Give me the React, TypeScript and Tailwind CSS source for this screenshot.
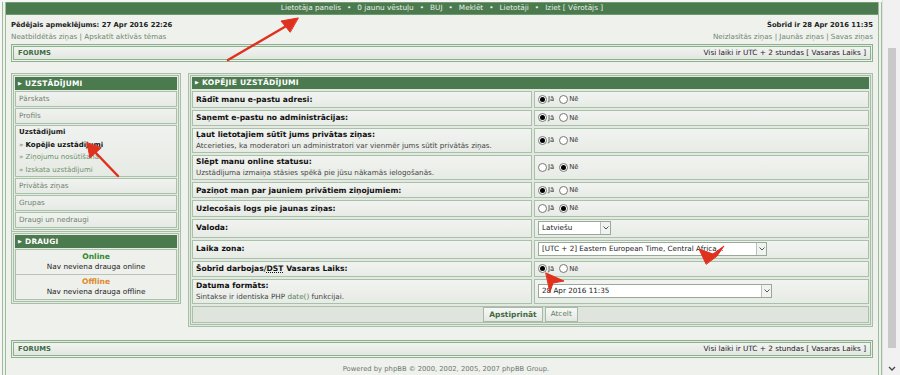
import React from 'react';

const font = "font-['DejaVu_Sans','Liberation_Sans',sans-serif]";

function Radio({ on }: { on?: boolean }) {
  return (
    <span className="inline-flex w-[9px] h-[9px] rounded-full border border-[#777] bg-white items-center justify-center">
      {on && <span className="w-[5px] h-[5px] rounded-full bg-black" />}
    </span>
  );
}

function YesNo({ yes }: { yes: boolean }) {
  return (
    <div className="flex items-center gap-[1px] text-[6.8px] text-[#333]">
      <Radio on={yes} />
      <span className="mr-[4px]">Jā</span>
      <Radio on={!yes} />
      <span>Nē</span>
    </div>
  );
}

function Select({ text, w }: { text: string; w: string }) {
  return (
    <div className={`flex items-center h-[14px] border border-[#9aa89a] bg-white ${w}`}>
      <span className="flex-1 pl-[3px] text-[7.2px] text-[#222] whitespace-nowrap overflow-hidden">{text}</span>
      <span className="w-[10px] h-full border-l border-[#b8c2b8] flex items-center justify-center bg-[#f1f3f1]">
        <svg width="6" height="4" viewBox="0 0 6 4"><path d="M0.5 0.5 L3 3 L5.5 0.5" stroke="#555" fill="none" strokeWidth="1" /></svg>
      </span>
    </div>
  );
}

function ForumsBar() {
  return (
    <div className="h-[18px] border-[3px] border-double border-[#8db08d] bg-gradient-to-b from-[#f1f3f0] to-[#e3e7e1] flex items-center justify-between px-[4px]">
      <span className="text-[6.8px] font-bold text-[#3f6b43]">FORUMS</span>
      <span className="text-[7.3px] text-[#222]">Visi laiki ir UTC + 2 stundas [ Vasaras Laiks ]</span>
    </div>
  );
}

function Head({ title, size }: { title: string; size: string }) {
  return (
    <div className={`h-[13px] bg-[#4a7a4e] flex items-center px-[3px] gap-[3px] text-white font-bold tracking-[0.2px] ${size}`}>
      <span className="text-[5px]">▶</span>
      {title}
    </div>
  );
}

function MenuItem({ label }: { label: string }) {
  return (
    <div className="h-[16px] border border-[#a9c0a9] bg-gradient-to-b from-[#f0f2ef] to-[#e6eae4] flex items-center px-[3px] text-[7.2px] text-[#6f826f]">
      {label}
    </div>
  );
}

type Row = { label: React.ReactNode; desc?: React.ReactNode; h: string; value: React.ReactNode };

const rows: Row[] = [
  { label: 'Rādīt manu e-pastu adresi:', h: 'h-[17px]', value: <YesNo yes /> },
  { label: 'Saņemt e-pastu no administrācijas:', h: 'h-[17px]', value: <YesNo yes /> },
  {
    label: 'Ļaut lietotajiem sūtīt jums privātas ziņas:',
    desc: 'Atcerieties, ka moderatori un administratori var vienmēr jums sūtīt privātās ziņas.',
    h: 'h-[26px]',
    value: <YesNo yes />,
  },
  {
    label: 'Slēpt manu online statusu:',
    desc: 'Uzstādījuma izmaiņa stāsies spēkā pie jūsu nākamās ielogošanās.',
    h: 'h-[26px]',
    value: <YesNo yes={false} />,
  },
  { label: 'Paziņot man par jauniem privātiem ziņojumiem:', h: 'h-[17px]', value: <YesNo yes /> },
  { label: 'Uzlecošais logs pie jaunas ziņas:', h: 'h-[17px]', value: <YesNo yes={false} /> },
  { label: 'Valoda:', h: 'h-[20px]', value: <Select text="Latviešu" w="w-[73px]" /> },
  {
    label: 'Laika zona:',
    h: 'h-[20px]',
    value: <Select text="[UTC + 2] Eastern European Time, Central Africa..." w="w-[229px]" />,
  },
  {
    label: (
      <>
        Šobrīd darbojas/<span className="underline decoration-dotted">DST</span> Vasaras Laiks:
      </>
    ),
    h: 'h-[17px]',
    value: <YesNo yes />,
  },
  {
    label: 'Datuma formāts:',
    desc: (
      <>
        Sintakse ir identiska PHP <span className="text-[#5c7f5c]">date()</span> funkcijai.
      </>
    ),
    h: 'h-[25px]',
    value: <Select text="28 Apr 2016 11:35" w="w-[234px]" />,
  },
];

export default function App() {
  return (
    <div className={`${font} w-[900px] h-[375px] overflow-hidden flex bg-[#f6f7f5] relative`}>
      {/* page */}
      <div className="w-[882px] h-full pl-[2px] pt-[2px]">
        <div className="h-[400px] border-x-[4px] border-double border-[#9dbb9d] bg-[#eef1ec] flex flex-col">
          {/* navbar */}
          <div className="h-[13px] bg-[#4a7a4e] border-y border-[#6f9a72] flex items-center justify-center text-[7.3px] text-[#e9f1e9] gap-[6px]">
            <span>Lietotāja panelis</span>•<span>0 jaunu vēstuļu</span>•<span>BUJ</span>•<span>Meklēt</span>•
            <span>Lietotāji</span>•<span>Iziet [ Vērotājs ]</span>
          </div>

          <div className="px-[5px] flex flex-col">
            {/* info row */}
            <div className="flex justify-between pt-[5px] h-[29px]">
              <div className="flex flex-col gap-[2px]">
                <span className="text-[6.8px] font-bold text-[#222]">Pēdējais apmeklējums: 27 Apr 2016 22:26</span>
                <span className="text-[7.2px] text-[#6f876f]">Neatbildētās ziņas | Apskatīt aktīvās tēmas</span>
              </div>
              <div className="flex flex-col gap-[2px] items-end">
                <span className="text-[6.8px] font-bold text-[#222]">Šobrīd ir 28 Apr 2016 11:35</span>
                <span className="text-[7.2px] text-[#6f876f]">Neizlasītās ziņas | Jaunās ziņas | Savas ziņas</span>
              </div>
            </div>

            <ForumsBar />

            <div className="flex gap-[7px] mt-[11px] h-[255px]">
              {/* left column */}
              <div className="w-[170px] flex flex-col">
                <div className="border-[3px] border-double border-[#a6bfa6] bg-[#e6ebe4] p-[1px] flex flex-col gap-[1px]">
                  <Head title="UZSTĀDĪJUMI" size="text-[7.4px]" />
                  <MenuItem label="Pārskats" />
                  <MenuItem label="Profils" />
                  <div className="h-[52px] border border-[#a9c0a9] bg-gradient-to-b from-[#f0f2ef] to-[#e6eae4] flex flex-col justify-center px-[3px] gap-[2px] text-[7px]">
                    <span className="font-bold text-[#222]">Uzstādījumi</span>
                    <span className="font-bold text-[#111]">
                      <span className="text-[#6f826f] font-normal">» </span>Kopējie uzstādījumi
                    </span>
                    <span className="text-[#6f8f6f]">» Ziņojumu nosūtīšana</span>
                    <span className="text-[#6f8f6f]">» Izskata uzstādījumi</span>
                  </div>
                  <MenuItem label="Privātās ziņas" />
                  <MenuItem label="Grupas" />
                  <MenuItem label="Draugi un nedraugi" />
                </div>
                <div className="border-[3px] border-double border-[#a6bfa6] bg-[#e6ebe4] p-[1px] flex flex-col gap-[1px] -mt-[1px]">
                  <Head title="DRAUGI" size="text-[7.4px]" />
                  <div className="border border-[#a9c0a9] bg-[#eef0ec] flex flex-col items-center text-[7.3px] pt-[2px] pb-[2px] leading-[10px]">
                    <span className="font-bold text-[#2f8a2f] text-[7.6px]">Online</span>
                    <span className="text-[#222]">Nav neviena drauga online</span>
                    <div className="w-[160px] h-px bg-[#b8c4b8] my-[2px]" />
                    <span className="font-bold text-[#e08a2a] text-[7.6px]">Offline</span>
                    <span className="text-[#222]">Nav neviena drauga offline</span>
                  </div>
                </div>
              </div>

              {/* right column */}
              <div className="flex-1 h-[254px] border-[3px] border-double border-[#a6bfa6] bg-[#e3e8e1] p-[1px] flex flex-col gap-[2px]">
                <Head title="KOPĒJIE UZSTĀDĪJUMI" size="text-[7.6px]" />
                {rows.map((r, i) => (
                  <div key={i} className={`flex gap-[2px] ${r.h}`}>
                    <div className="w-[340px] border border-[#a9c0a9] bg-gradient-to-b from-[#f1f3f0] to-[#e7ebe5] flex flex-col justify-center px-[3px] gap-[1px]">
                      <span className="text-[7.6px] font-bold text-[#111]">{r.label}</span>
                      {r.desc && <span className="text-[7.2px] text-[#444]">{r.desc}</span>}
                    </div>
                    <div className="flex-1 border border-[#a9c0a9] bg-gradient-to-b from-[#f1f3f0] to-[#e7ebe5] flex items-center px-[3px]">
                      {r.value}
                    </div>
                  </div>
                ))}
                <div className="h-[18px] border border-[#a9c0a9] bg-[#dfe4dd] flex items-center justify-center gap-[2px]">
                  <span className="h-[15px] px-[5px] border border-[#a9b9a9] bg-gradient-to-b from-[#f7f8f6] to-[#e4e8e2] flex items-center text-[7.5px] font-bold text-[#3f6b43]">
                    Apstiprināt
                  </span>
                  <span className="h-[15px] px-[5px] border border-[#a9b9a9] bg-gradient-to-b from-[#f7f8f6] to-[#e4e8e2] flex items-center text-[7.3px] text-[#5f7f5f]">
                    Atcelt
                  </span>
                </div>
              </div>
            </div>

            <div className="mt-[12px]">
              <ForumsBar />
            </div>
            <div className="text-center text-[6.8px] text-[#6f756f] mt-[6px] ml-[8px]">
              Powered by phpBB © 2000, 2002, 2005, 2007 phpBB Group.
            </div>
          </div>
        </div>
      </div>

      {/* scrollbar */}
      <div className="w-[18px] h-full bg-[#f1f1f1] flex flex-col items-center pt-[48px] border-l border-[#e2e2e2]">
        <div className="w-[8px] h-[300px] bg-[#c9c9c9]" />
        <div className="mt-auto mb-[3px]">
          <svg width="8" height="6" viewBox="0 0 8 6"><path d="M1 1 L4 4 L7 1" stroke="#444" fill="none" strokeWidth="1.3" /></svg>
        </div>
      </div>

      {/* red annotation arrows */}
      <svg className="absolute inset-0 pointer-events-none" width="900" height="375" viewBox="0 0 900 375">
        <g fill="#e0301e" stroke="#e0301e" strokeLinecap="round">
          <line x1="228" y1="60" x2="288" y2="25" strokeWidth="2.5" />
          <polygon points="298,18 281,21 290,32" />
          <line x1="118" y1="176" x2="94" y2="151" strokeWidth="2.5" />
          <polygon points="87,143 90,158 101,148" />
          <polygon points="706,264 699,249 713,254 724,246 717,256" />
          <polygon points="546,273 564,281 553,283 550,292" />
        </g>
      </svg>
    </div>
  );
}
